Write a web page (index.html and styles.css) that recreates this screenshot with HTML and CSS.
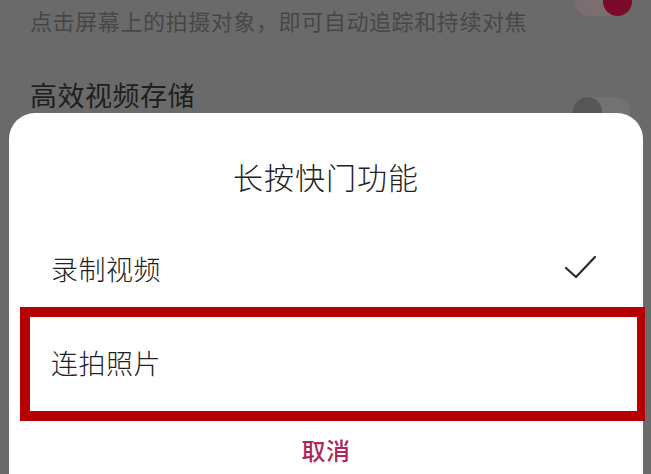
FILE: index.html
```html
<!DOCTYPE html>
<html lang="zh-CN">
<head>
    <meta charset="UTF-8">
    <meta name="viewport" content="width=device-width, initial-scale=1.0">
    <title>长按快门功能</title>
    <link rel="stylesheet" href="styles.css">
</head>
<body>
    <div class="settings">
        <div class="setting-row first">
            <p class="setting-desc">点击屏幕上的拍摄对象，即可自动追踪和持续对焦</p>
            <span class="switch on"><span class="knob"></span></span>
        </div>
        <div class="setting-row second">
            <p class="setting-title">高效视频存储</p>
            <span class="switch"><span class="knob"></span></span>
        </div>
    </div>

    <div class="sheet">
        <h1 class="sheet-title">长按快门功能</h1>
        <div class="option">
            <span>录制视频</span>
            <svg class="check" width="33" height="24" viewBox="0 0 33 24">
                <polyline points="2,13 12,22 31,2" fill="none" stroke="#2b2b2b" stroke-width="2.2" stroke-linecap="round" stroke-linejoin="round"/>
            </svg>
        </div>
        <div class="option highlight">
            <span>连拍照片</span>
        </div>
        <button class="cancel-btn">取消</button>
    </div>
</body>
</html>
```

FILE: styles.css
```css
* {
    margin: 0;
    padding: 0;
    box-sizing: border-box;
    font-family: 'Noto Sans CJK SC', 'Noto Sans', sans-serif;
}

body {
    background-color: #6a6a6a;
    width: 651px;
    height: 474px;
    overflow: hidden;
    position: relative;
}

/* 背景里的设置项 */
.settings {
    padding: 5px 20px 0 30px;
}

.setting-row {
    display: flex;
    justify-content: space-between;
    align-items: flex-start;
}

.setting-desc {
    color: #474747;
    font-size: 22px;
    line-height: 30px;
    letter-spacing: 0.6px;
}

.setting-title {
    color: #1e1e1e;
    font-size: 27px;
    line-height: 36px;
    letter-spacing: 0.5px;
}

.second {
    margin-top: 42px;
}

.first .switch {
    margin-top: -18px;
    margin-right: -1px;
}

.second .switch {
    margin-top: 20px;
    margin-right: 1px;
}

.switch {
    display: flex;
    width: 57px;
    height: 29px;
    border-radius: 15px;
    background-color: #727272;
}

.switch .knob {
    width: 29px;
    height: 29px;
    border-radius: 50%;
    background-color: #575757;
}

.switch.on {
    background-color: #7c6d71;
    justify-content: flex-end;
}

.switch.on .knob {
    background-color: #7b0a2b;
}

/* 底部弹出框 */
.sheet {
    position: absolute;
    top: 113px;
    left: 9px;
    right: 8px;
    bottom: 0;
    background-color: #fff;
    border-radius: 26px 26px 0 0;
    padding-top: 43px;
    display: flex;
    flex-direction: column;
}

.sheet-title {
    text-align: center;
    font-size: 30px;
    font-weight: 300;
    line-height: 40px;
    letter-spacing: 1px;
    color: #222;
    margin-bottom: 25px;
}

.option {
    height: 94px;
    display: flex;
    align-items: center;
    justify-content: space-between;
    padding: 0 46px 0 42px;
    font-size: 27px;
    font-weight: 300;
    letter-spacing: 0.5px;
    color: #222;
    position: relative;
}

.check {
    margin-top: -2px;
}

.highlight::after {
    content: '';
    position: absolute;
    left: 11px;
    right: -2px;
    top: -8px;
    bottom: -12px;
    border: 10px solid #b70000;
    border-right-width: 8px;
}

.cancel-btn {
    margin-top: 21px;
    align-self: center;
    background: none;
    border: none;
    color: #b0265a;
    font-size: 24px;
    font-weight: 500;
    line-height: 40px;
    letter-spacing: 0.5px;
}
```
